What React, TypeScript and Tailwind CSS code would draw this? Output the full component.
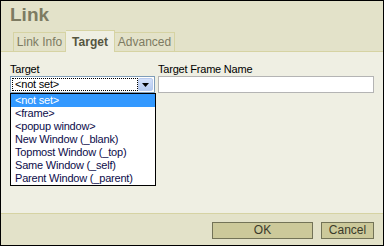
import React from 'react';

const options = [
  '<not set>',
  '<frame>',
  '<popup window>',
  'New Window (_blank)',
  'Topmost Window (_top)',
  'Same Window (_self)',
  'Parent Window (_parent)',
];

export default function App() {
  return (
    <div className="w-[384px] h-[246px] border border-black bg-[#efefe3] flex flex-col font-['Liberation_Sans',Arial,sans-serif] text-[11px] text-black overflow-hidden">
      {/* Title + tabs */}
      <div className="h-[51px] bg-[#e3e2c9] border-b border-[#d6d3a3] flex flex-col">
        <div className="h-[29px] pl-[9px] pt-[2px] text-[19px] leading-[24px] font-bold text-[#7d7b62]">
          Link
        </div>
        <div className="flex items-end h-[21px] pl-[12px]">
          <div className="h-[19px] w-[53px] border border-b-0 border-[#d6d3a3] flex items-center justify-center text-[12px] text-[#7d7b62]">
            Link Info
          </div>
          <div className="h-[22px] w-[49px] -mb-px border border-b-0 border-l-0 border-[#d6d3a3] bg-[#efefe3] flex items-center justify-center text-[12px] font-bold text-[#55553f]">
            Target
          </div>
          <div className="h-[19px] w-[60px] border border-b-0 border-l-0 border-[#d6d3a3] flex items-center justify-center text-[12px] text-[#7d7b62]">
            Advanced
          </div>
        </div>
      </div>

      {/* Body */}
      <div className="flex-1 relative pl-[9px] pt-[11px] flex gap-[3px] tracking-[-0.2px]">
        <div className="w-[145px] flex flex-col">
          <div className="h-[13px] leading-[13px]">Target</div>
          <div className="h-[17px] border border-[#7f9db9] bg-white flex p-px">
            <div className="flex-1 border border-dotted border-black leading-[11px] pl-[2px]">&lt;not set&gt;</div>
            <div className="w-[15px] rounded-[2px] border border-[#b9cbef] bg-gradient-to-b from-[#d3e0fa] to-[#b6cbf1] flex items-center justify-center">
              <svg width="7" height="4" viewBox="0 0 7 4">
                <path d="M0 0h7L3.5 4z" fill="#000" />
              </svg>
            </div>
          </div>
        </div>
        <div className="w-[216px] flex flex-col">
          <div className="h-[13px] leading-[13px]">Target Frame Name</div>
          <div className="h-[17px] border border-[#b4b4b4] bg-white" />
        </div>

        {/* Open dropdown list */}
        <div className="absolute left-[9px] top-[41px] w-[146px] border border-black bg-white flex flex-col">
          {options.map((o, i) => (
            <div
              key={o}
              className={`h-[13px] leading-[13px] pl-[4px] ${i === 0 ? 'bg-[#3399ff] text-white' : 'text-[#0c0c4a]'}`}
            >
              {o}
            </div>
          ))}
        </div>
      </div>

      {/* Footer */}
      <div className="h-[32px] bg-[#e3e2c9] border-t border-[#d6d3a3] flex items-start justify-end gap-[8px] pt-[8px] pr-[9px]">
        <button className="w-[101px] h-[17px] border border-[#737357] bg-[#ccc99a] text-[12px] leading-[15px] text-[#3a3a2a]">
          OK
        </button>
        <button className="w-[53px] h-[17px] border border-[#737357] bg-[#ccc99a] text-[12px] leading-[15px] text-[#3a3a2a]">
          Cancel
        </button>
      </div>
    </div>
  );
}
